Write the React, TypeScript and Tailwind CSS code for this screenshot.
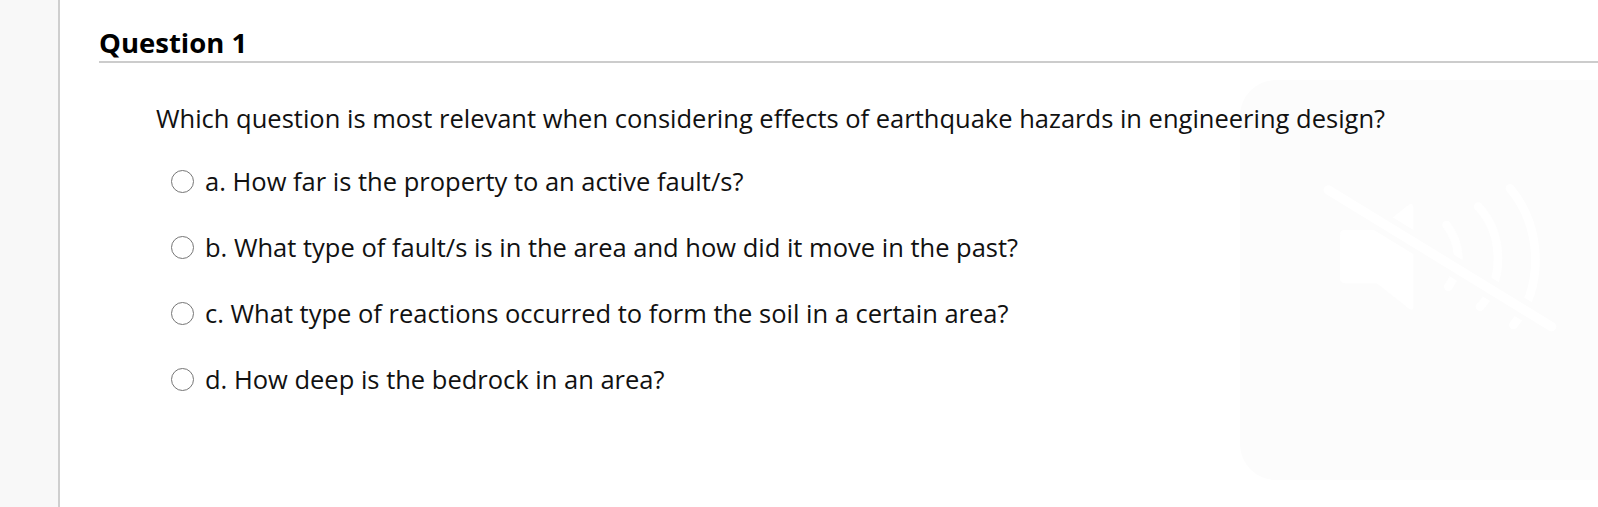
const options = [
  "a. How far is the property to an active fault/s?",
  "b. What type of fault/s is in the area and how did it move in the past?",
  "c. What type of reactions occurred to form the soil in a certain area?",
  "d. How deep is the bedrock in an area?",
];

function MutedSpeaker() {
  return (
    <svg width="260" height="170" viewBox="0 0 780 510" className="absolute left-[1300px] top-[170px]">
      <g fill="none" stroke="#ffffff" strokeWidth="26" strokeLinecap="round">
        <path d="M440 165 C 480 220, 490 290, 445 350" />
        <path d="M535 110 C 610 190, 615 330, 540 410" />
        <path d="M630 55 C 730 170, 730 360, 640 465" />
      </g>
      <path d="M120 195 Q120 180 135 180 L230 180 L325 105 Q340 95 340 115 L340 410 Q340 425 325 415 L230 340 L135 340 Q120 340 120 325 Z" fill="#ffffff" />
      <line x1="85" y1="60" x2="755" y2="470" stroke="#fcfcfc" strokeWidth="62" strokeLinecap="round" />
      <line x1="85" y1="60" x2="755" y2="470" stroke="#ffffff" strokeWidth="28" strokeLinecap="round" />
    </svg>
  );
}

export default function App() {
  return (
    <div className="relative flex h-[507px] w-full overflow-hidden bg-white font-['Open_Sans',sans-serif]">
      <div className="w-[60px] shrink-0 border-r-2 border-[#cfcfcf] bg-[#f8f8f8]" />

      <div className="pointer-events-none absolute left-[1240px] top-[80px] bottom-[27px] right-0 rounded-l-[36px] bg-[#fcfcfc]" />
      <MutedSpeaker />

      <main className="relative flex-1 pl-[39px]">
        <h1 className="border-b-2 border-[#cccccc] pt-[25px] text-[27.5px] font-bold leading-[36px] text-black">
          Question 1
        </h1>

        <div className="pl-[57px] pt-[39px] text-[25.5px] leading-[32px] text-[#111111]">
          <p>Which question is most relevant when considering effects of earthquake hazards in engineering design?</p>
          <div className="mt-[31px] flex flex-col gap-[34px] pl-[15px]">
            {options.map((option) => (
              <label key={option} className="flex items-center gap-[11px]">
                <span className="h-[23px] w-[23px] shrink-0 rounded-full border-[1.5px] border-[#767676] bg-white" />
                <span>{option}</span>
              </label>
            ))}
          </div>
        </div>
      </main>
    </div>
  );
}
